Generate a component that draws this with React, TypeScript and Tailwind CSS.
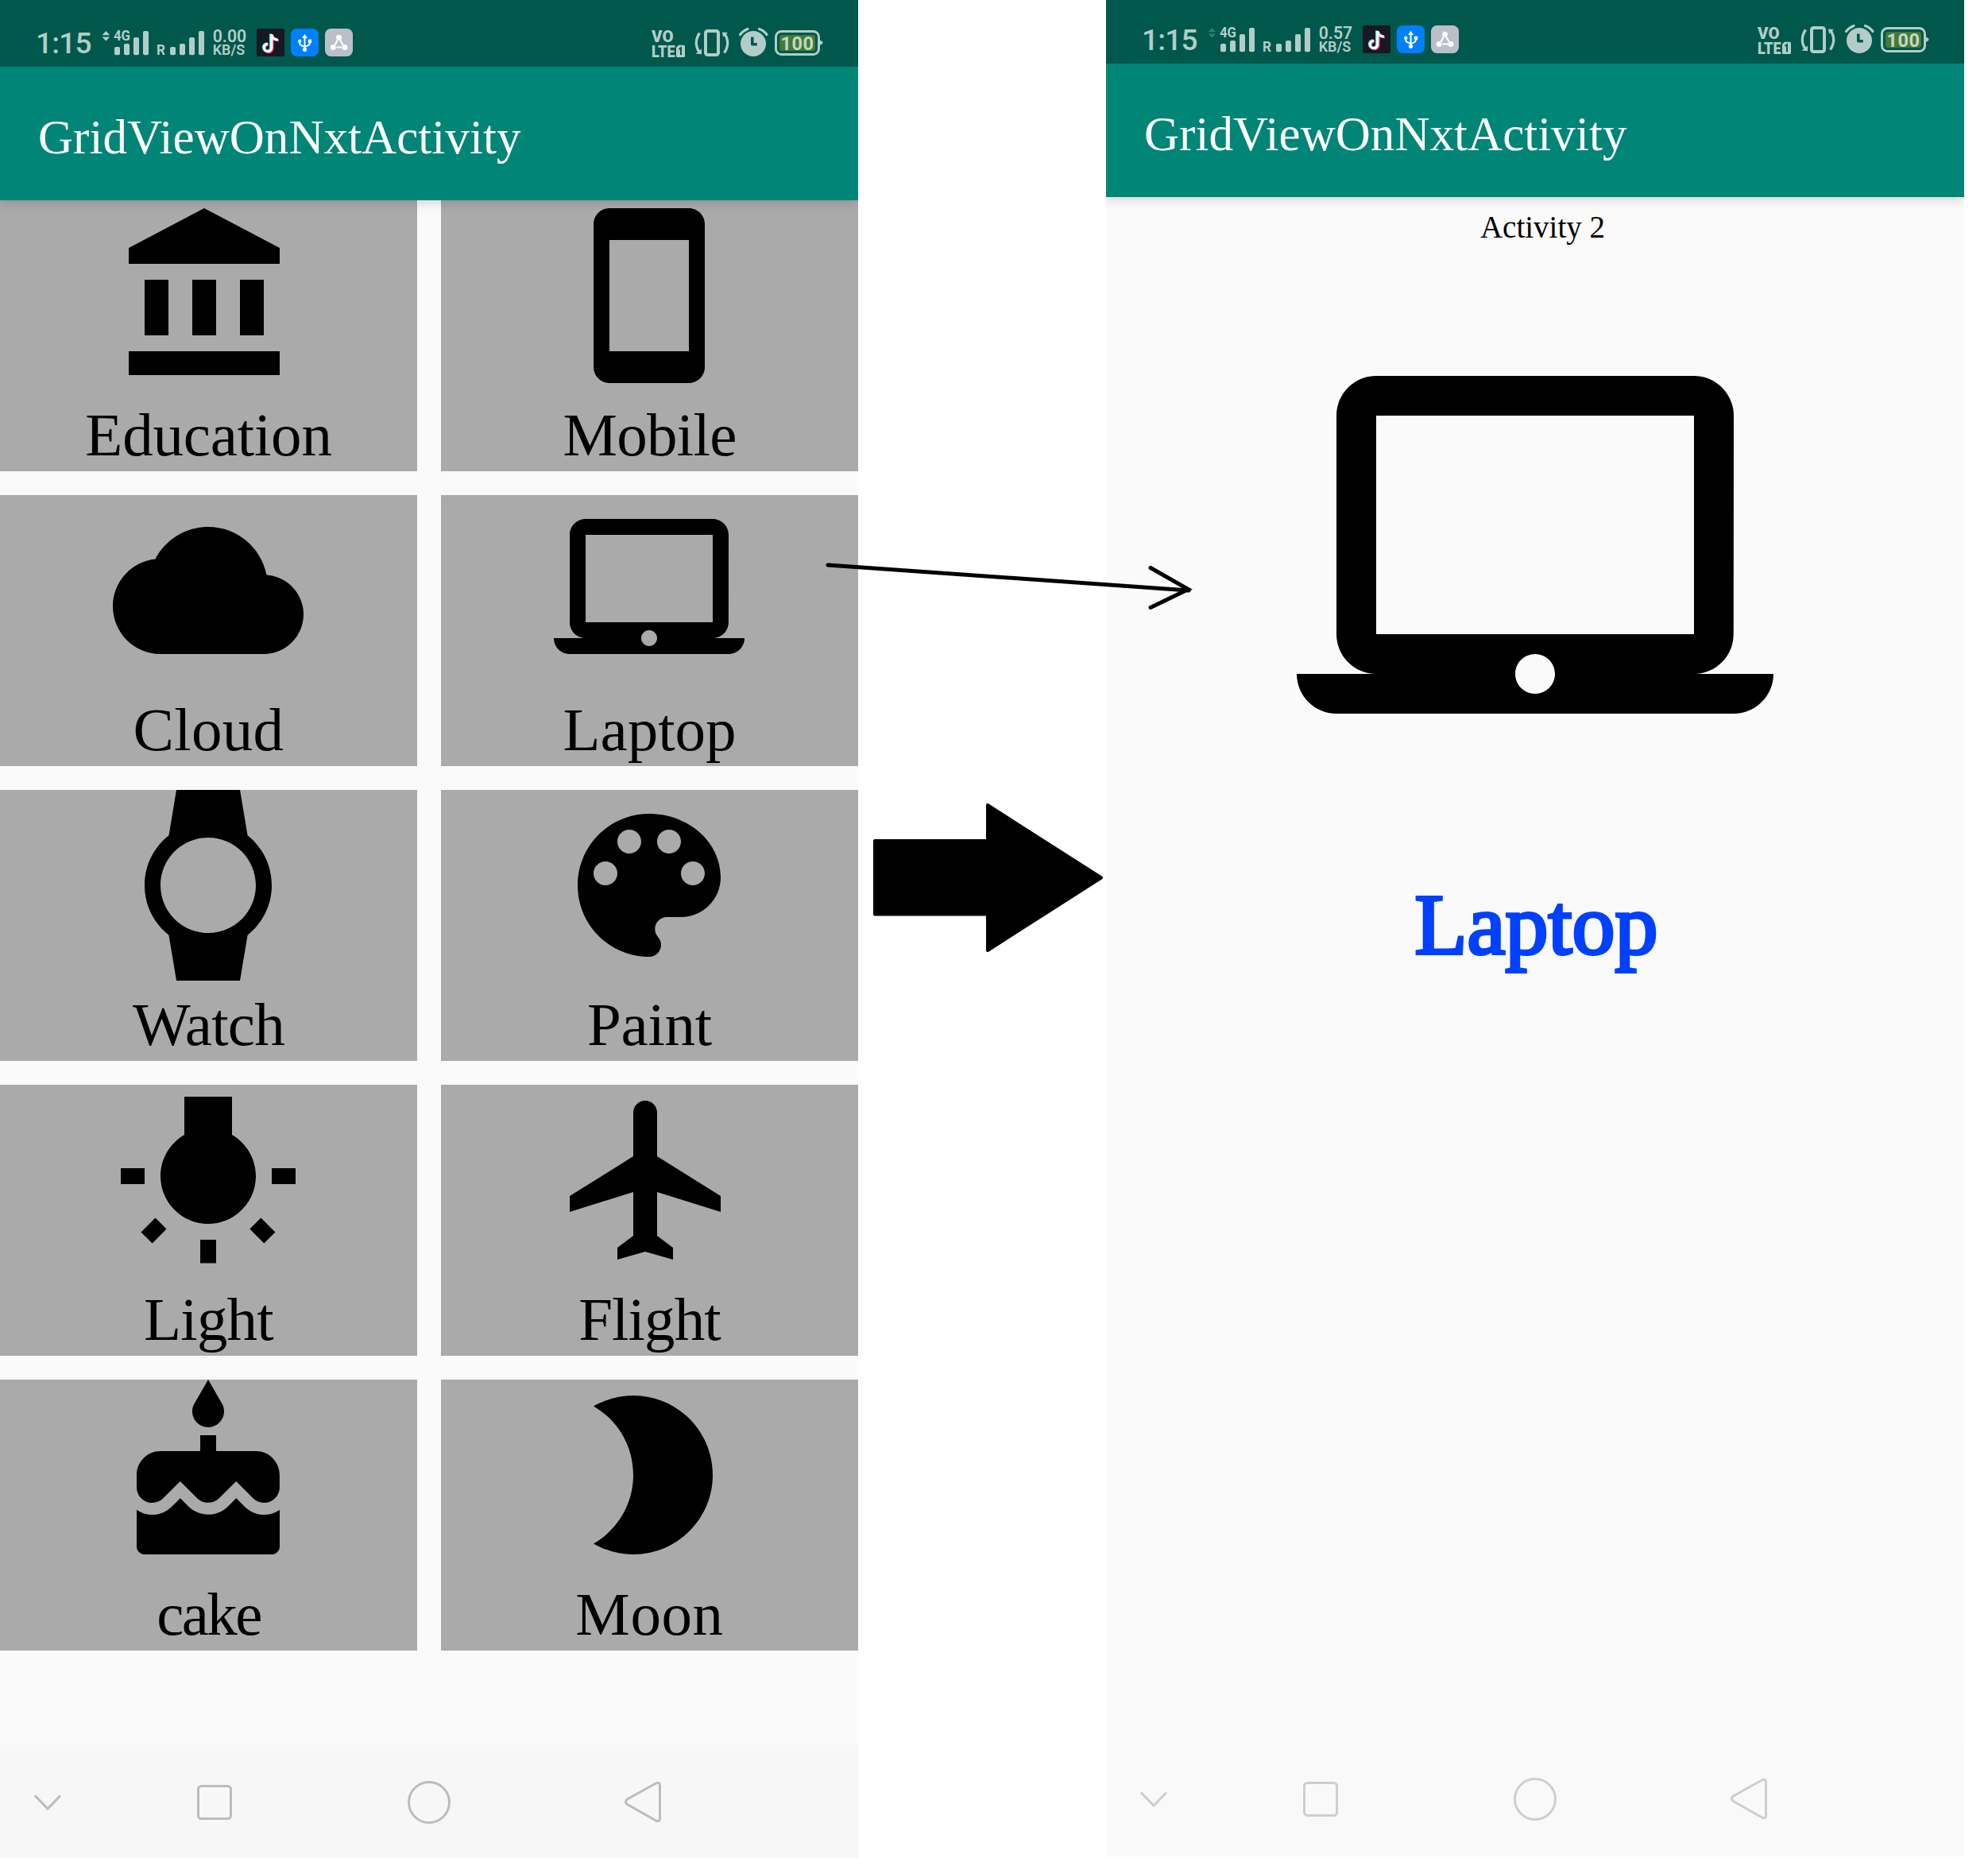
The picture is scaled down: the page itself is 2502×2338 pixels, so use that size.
import type { ReactNode } from "react";

const ICONS = {
  education:
    "M4 10v7h3v-7H4zm6 0v7h3v-7h-3zM2 22h19v-3H2v3zm14-12v7h3v-7h-3zm-4.5-9L2 6v2h19V6l-9.5-5z",
  mobile:
    "M17 1.01L7 1c-1.1 0-2 .9-2 2v18c0 1.1.9 2 2 2h10c1.1 0 2-.9 2-2V3c0-1.1-.9-1.99-2-1.99zM17 19H7V5h10v14z",
  cloud:
    "M19.35 10.04C18.67 6.59 15.64 4 12 4 9.11 4 6.6 5.64 5.35 8.04 2.34 8.36 0 10.91 0 14c0 3.31 2.69 6 6 6h13c2.76 0 5-2.24 5-5 0-2.64-2.05-4.78-4.65-4.96z",
  laptop:
    "M20 18c1.1 0 1.99-.9 1.99-2L22 5c0-1.1-.9-2-2-2H4c-1.1 0-2 .9-2 2v11c0 1.1.9 2 2 2H0c0 1.1.9 2 2 2h20c1.1 0 2-.9 2-2h-4zM4 5h16v11H4V5zm8 14c-.55 0-1-.45-1-1s.45-1 1-1 1 .45 1 1-.45 1-1 1z",
  watch:
    "M20 12c0-2.54-1.19-4.81-3.04-6.27L16 0H8l-.95 5.73C5.19 7.19 4 9.45 4 12s1.19 4.81 3.05 6.27L8 24h8l.96-5.73C18.81 16.81 20 14.54 20 12zM6 12c0-3.31 2.69-6 6-6s6 2.69 6 6-2.69 6-6 6-6-2.69-6-6z",
  paint:
    "M12 3c-4.97 0-9 4.03-9 9s4.03 9 9 9c.83 0 1.5-.67 1.5-1.5 0-.39-.15-.74-.39-1.01-.23-.26-.38-.61-.38-.99 0-.83.67-1.5 1.5-1.5H16c2.76 0 5-2.24 5-5 0-4.42-4.03-8-9-8zm-5.5 9c-.83 0-1.5-.67-1.5-1.5S5.67 9 6.5 9 8 9.67 8 10.5 7.33 12 6.5 12zm3-4C8.67 8 8 7.33 8 6.5S8.67 5 9.5 5s1.5.67 1.5 1.5S10.33 8 9.5 8zm5 0c-.83 0-1.5-.67-1.5-1.5S13.67 5 14.5 5s1.5.67 1.5 1.5S15.33 8 14.5 8zm3 4c-.83 0-1.5-.67-1.5-1.5S16.67 9 17.5 9s1.5.67 1.5 1.5-.67 1.5-1.5 1.5z",
  light:
    "M3.55 18.54l1.41 1.41 1.8-1.79-1.41-1.41-1.8 1.79zM11 22.45h2V19.5h-2v2.95zM4 10.5H1v2h3v-2zm11-4.19V1.5H9v4.81C7.21 7.35 6 9.28 6 11.5c0 3.31 2.69 6 6 6s6-2.69 6-6c0-2.22-1.21-4.15-3-5.19zm5 4.19v2h3v-2h-3zm-2.76 7.66l1.79 1.8 1.41-1.41-1.8-1.79-1.4 1.4z",
  flight:
    "M21 16v-2l-8-5V3.5c0-.83-.67-1.5-1.5-1.5S10 2.67 10 3.5V9l-8 5v2l8-2.5V19l-2 1.5V22l3.5-1 3.5 1v-1.5L13 19v-5.5l8 2.5z",
  cake: "M12 6c1.11 0 2-.9 2-2 0-.38-.1-.73-.29-1.03L12 0l-1.71 2.97c-.19.3-.29.65-.29 1.03 0 1.1.9 2 2 2zm4.6 9.99l-1.07-1.07-1.08 1.07c-1.3 1.3-3.58 1.31-4.89 0l-1.07-1.07-1.09 1.07C6.75 16.64 5.88 17 4.96 17c-.73 0-1.4-.23-1.96-.61V21c0 .55.45 1 1 1h16c.55 0 1-.45 1-1v-4.61c-.56.38-1.23.61-1.96.61-.92 0-1.79-.36-2.44-1.01zM18 9h-5V7h-2v2H6c-1.66 0-3 1.34-3 3v1.54c0 1.08.88 1.96 1.96 1.96.52 0 1.02-.2 1.38-.57l2.14-2.13 2.13 2.13c.74.74 2.03.74 2.77 0l2.14-2.13 2.13 2.13c.37.37.86.57 1.38.57 1.08 0 1.96-.88 1.96-1.96V12c0-1.66-1.34-3-3-3z",
  moon: "M10 2c-1.82 0-3.53.5-5 1.35C7.99 5.08 10 8.3 10 12s-2.01 6.92-5 8.65C6.47 21.5 8.18 22 10 22c5.52 0 10-4.48 10-10S15.52 2 10 2z",
};

const ITEMS: { icon: keyof typeof ICONS; label: string; spacing: string }[] = [
  { icon: "education", label: "Education", spacing: "tracking-[-0.2px]" },
  { icon: "mobile", label: "Mobile", spacing: "tracking-[-0.7px]" },
  { icon: "cloud", label: "Cloud", spacing: "tracking-[0.3px]" },
  { icon: "laptop", label: "Laptop", spacing: "tracking-[0px]" },
  { icon: "watch", label: "Watch", spacing: "tracking-[-0.8px]" },
  { icon: "paint", label: "Paint", spacing: "tracking-[-0.3px]" },
  { icon: "light", label: "Light", spacing: "tracking-[-0.8px]" },
  { icon: "flight", label: "Flight", spacing: "tracking-[-0.9px]" },
  { icon: "cake", label: "cake", spacing: "tracking-[-2.6px]" },
  { icon: "moon", label: "Moon", spacing: "tracking-[0.6px]" },
];

const FG = "#b2cdc9";
const ROBOTO = "Roboto, sans-serif";

function MaterialIcon({ name, className }: { name: keyof typeof ICONS; className: string }) {
  return (
    <svg viewBox="0 0 24 24" className={className} fill="#000">
      <path d={ICONS[name]} />
    </svg>
  );
}

function Bars({ x }: { x: number }) {
  return (
    <g fill={FG}>
      <rect x={x} y="20" width="7" height="10.3" rx="2" />
      <rect x={x + 12} y="16" width="7" height="14.3" rx="2" />
      <rect x={x + 24} y="8" width="7" height="22.3" rx="2" />
      <rect x={x + 36} y="0" width="7" height="30.3" rx="2" />
    </g>
  );
}

function StatusBar({ speed, dim }: { speed: string; dim: boolean }) {
  return (
    <div className="flex h-[84px] items-start bg-[#00574b] font-[Roboto,sans-serif] text-[#b2cdc9]">
      <div className="mt-[35px] ml-[45px] w-[83px] text-[37px] leading-[40px] font-medium tracking-[-0.8px] whitespace-nowrap">
        1:15
      </div>
      <svg className="mt-[39px] h-[32px] w-[130px] overflow-visible" viewBox="0 0 130 32">
        <g fill={FG} opacity={dim ? 0.3 : 1}>
          <path d="M.5 5.2 5.4 0l4.9 5.2zM.5 7.4h9.8L5.4 12.4z" />
        </g>
        <text x="15" y="12.2" fontSize="17.5" fontWeight="700" fontFamily={ROBOTO} fill={FG} textLength="21" lengthAdjust="spacingAndGlyphs">
          4G
        </text>
        <Bars x={16} />
        <text x="69" y="30" fontSize="17.5" fontWeight="700" fontFamily={ROBOTO} fill={FG} textLength="11" lengthAdjust="spacingAndGlyphs">
          R
        </text>
        <Bars x={86} />
      </svg>
      <svg className="mt-[36px] ml-[9px] h-[35px] w-[56px] overflow-visible" viewBox="267 36 56 35">
        <g fontFamily={ROBOTO} fontWeight="600" fill={FG}>
          <text x="267.700" y="53.200" fontSize="22" textLength="42.500" lengthAdjust="spacingAndGlyphs">
            {speed}
          </text>
          <text x="267.700" y="69" fontSize="18.300" textLength="40.500" lengthAdjust="spacingAndGlyphs">
            KB/S
          </text>
        </g>
      </svg>
      <svg className="mt-[36px] h-[35px] w-[35px]" viewBox="0 0 35 35">
        <rect width="35" height="35" rx="2.5" fill="#161823" />
        <g fill="none" strokeWidth="3.2">
          <path d="M17.6 6.5v17a4.6 4.6 0 1 1-4.6-4.6M17.6 7c.5 3.8 3 6.4 7.5 6.7" stroke="#25f4ee" />
          <path d="M20 7.7v17a4.8 4.8 0 1 1-5-4.6M20 8.5c.5 3.8 3.5 6 8 6.4" stroke="#fe2c55" />
          <path d="M18.8 7v17a4.7 4.7 0 1 1-4.7-4.7M18.8 7.500c.5 4 3.200 6.300 7.900 6.600" stroke="#fff" />
        </g>
      </svg>
      <svg className="mt-[36px] ml-[8px] h-[35px] w-[35px]" viewBox="0 0 35 35">
        <rect width="35" height="35" rx="7.5" fill="#007fff" />
        <g fill="none" stroke="#fff" strokeWidth="2">
          <path d="M17.5 10v16M11 16v1.500c0 3 2.500 4.500 6.500 5.300M24 16v1.500c0 3-2.500 4.500-6.500 5.300" />
        </g>
        <g fill="#fff">
          <path d="M17.5 6.800 21 12h-7z" />
          <circle cx="17.5" cy="26.3" r="2.6" />
          <circle cx="11.2" cy="15.8" r="2.2" />
          <rect x="21.8" y="13.6" width="4.4" height="4.4" />
        </g>
      </svg>
      <svg className="mt-[36px] ml-[8px] h-[35px] w-[35px]" viewBox="0 0 35 35">
        <rect width="35" height="35" rx="7.5" fill="#babfcb" />
        <path d="M15.800 14.500 12.500 20.500M19.200 14.500l3.800 6.500M14.500 23.500h7" stroke="#fff" strokeWidth="2" />
        <g fill="#fff">
          <circle cx="17.5" cy="11.3" r="3.5" />
          <circle cx="10.2" cy="23.5" r="3.5" />
          <circle cx="25" cy="23.5" r="3.5" />
        </g>
      </svg>
      <svg className="mt-[34px] mr-[44px] ml-auto h-[40px] w-[216px] overflow-visible" viewBox="820 34 216 40">
        <g fontFamily={ROBOTO} fontWeight="900" fill={FG}>
          <text x="820" y="53" fontSize="20.5" textLength="27.5" lengthAdjust="spacingAndGlyphs">
            VO
          </text>
          <text x="820" y="71.5" fontSize="20.5" textLength="29.5" lengthAdjust="spacingAndGlyphs">
            LTE
          </text>
        </g>
        <path d="M854 56.700h6.500a1.500 1.500 0 0 1 1.500 1.500V70.500a1.500 1.500 0 0 1-1.500 1.500h-8a1.500 1.500 0 0 1-1.500-1.500V59.700z" fill={FG} />
        <path d="M854.500 62l2.500-1.800v9" stroke="#00574b" strokeWidth="2" fill="none" />
        <g fill="none" stroke={FG}>
          <rect x="888" y="39" width="16" height="30" rx="2.5" strokeWidth="4" />
          <path d="M880.500 41.500c-5.500 8-5.500 17 0 24.500M911.500 66.500c5.500-8 5.500-17 0-24.500" strokeWidth="3.4" />
        </g>
        <path d="M875.500 67.500l7.500.7v-6.800zM909 40.500l7 .5-6 5.500z" fill={FG} />
        <circle cx="948" cy="55" r="16" fill={FG} />
        <path d="M931.500 43.500q4-5 9.500-7M955.500 36.500q6 2 9.500 7" fill="none" stroke={FG} strokeWidth="3.2" strokeLinecap="round" />
        <path d="M946.800 46.500v9.300h6" fill="none" stroke="#00574b" strokeWidth="3.6" strokeLinejoin="round" />
        <rect x="976.5" y="39.5" width="54" height="29" rx="7" fill="none" stroke={FG} strokeWidth="3" />
        <path d="M1031.500 50.500q4 1.500 4 3.200t-4 3.200z" fill={FG} />
        <rect x="981" y="44" width="45" height="20" rx="3" fill="#417a3a" />
        <text x="982.5" y="62.7" fontSize="23.5" fontWeight="700" fontFamily={ROBOTO} fill="#c6d7c4" textLength="41.5">
          100
        </text>
      </svg>
    </div>
  );
}

function NavBar({ dim }: { dim: boolean }) {
  return (
    <div
      className={
        dim
          ? "flex h-[144px] shrink-0 items-center bg-[#f9f9f9] stroke-[#cecece]"
          : "flex h-[144px] shrink-0 items-center bg-[#f7f7f7] stroke-[#bcbcbc]"
      }
    >
      <svg className="ml-[40px] h-[60px] w-[40px]" viewBox="0 0 40 60" fill="none" strokeWidth="3.2">
        <path d="M4 21.500 20 38 36 21.500" />
      </svg>
      <svg className="ml-[160px] h-[60px] w-[60px]" viewBox="0 0 60 60" fill="none" strokeWidth="3">
        <rect x="9.5" y="9.5" width="41" height="41" rx="4" />
      </svg>
      <svg className="ml-[210px] h-[60px] w-[60px]" viewBox="0 0 60 60" fill="none" strokeWidth="3">
        <circle cx="30" cy="30" r="25.5" />
      </svg>
      <svg className="ml-[210px] h-[60px] w-[60px]" viewBox="0 0 60 60" fill="none" strokeWidth="3">
        <path d="M9.500 26 45.500 6Q50.500 4 50.500 8.500v42q0 4.500-5 2.500L9.500 32.500q-4-3 0-6.500z" />
      </svg>
    </div>
  );
}

function Phone({ speed, dim, children }: { speed: string; dim: boolean; children: ReactNode }) {
  return (
    <div className="flex h-[2340px] w-[1080px] flex-col overflow-hidden bg-[#fafafa]">
      <header className="relative z-10 shrink-0 shadow-[0_2px_14px_rgba(0,0,0,0.18)]">
        <StatusBar speed={speed} dim={dim} />
        <div className="h-[168px] bg-[#008577] pl-[48px] font-['Liberation_Serif',serif] text-[61px] leading-[178px] tracking-[0.06px] whitespace-nowrap text-white">
          GridViewOnNxtActivity
        </div>
      </header>
      <main className="flex-1">{children}</main>
      <NavBar dim={dim} />
    </div>
  );
}

function Tile({ icon, label, spacing }: { icon: keyof typeof ICONS; label: string; spacing: string }) {
  return (
    <div className="h-[341px] bg-[#aaaaaa]">
      <MaterialIcon name={icon} className="ml-[142px] h-[240px] w-[240px]" />
      <div
        className={`h-[101px] text-center font-['Liberation_Serif',serif] text-[77px] leading-[111px] text-black ${spacing}`}
      >
        {label}
      </div>
    </div>
  );
}

export default function App() {
  return (
    <div className="relative flex h-[2338px] w-[2502px] overflow-hidden bg-white">
      <div className="h-[2338px] w-[1080px] shrink-0 overflow-hidden">
        <Phone speed="0.00" dim={false}>
          <div className="grid grid-cols-2 gap-[30px]">
            {ITEMS.map((item) => (
              <Tile key={item.label} {...item} />
            ))}
          </div>
        </Phone>
      </div>

      <div className="w-[312px] shrink-0 pt-[1010px] pl-[18px]">
        <svg className="h-[190px] w-[292px]" viewBox="0 0 292 190">
          <path
            d="M3 48h142V3l143 91.500L145 186v-45.500H3z"
            fill="#000"
            stroke="#000"
            strokeWidth="4"
            strokeLinejoin="round"
          />
        </svg>
      </div>

      <div className="h-[2336px] w-[1080px] shrink-0 overflow-hidden">
        <div className="-mt-[4px]">
          <Phone speed="0.57" dim>
            <div className="flex flex-col items-center">
              <div className="mt-[13px] ml-[19px] h-[137px] font-['Liberation_Serif',serif] text-[39px] leading-[50px] text-black">
                Activity 2
              </div>
              <MaterialIcon name="laptop" className="h-[600px] w-[600px]" />
              <div className="mt-[91px] ml-[3px] font-['Liberation_Serif',serif] text-[108px] leading-[150px] text-[#0040ff] [-webkit-text-stroke:4px_#0040ff]">
                Laptop
              </div>
            </div>
          </Phone>
        </div>
      </div>

      <svg
        className="pointer-events-none absolute top-[700px] left-[1030px] z-20 h-[80px] w-[480px]"
        viewBox="1030 700 480 80"
        fill="none"
        stroke="#000"
        strokeWidth="5"
        strokeLinecap="round"
      >
        <path d="M1042 711 1496 743M1448 714.500 1495.500 741.500 1448 764.500" />
      </svg>
    </div>
  );
}
